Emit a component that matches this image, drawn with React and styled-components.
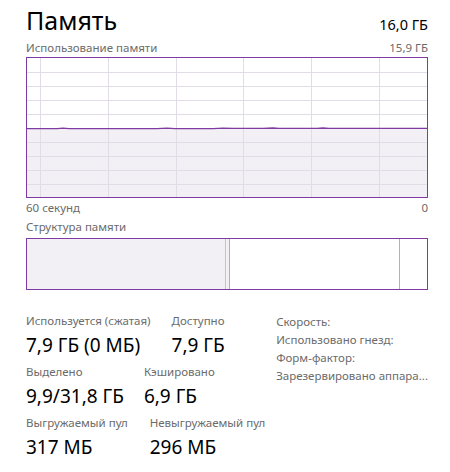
import React from "react";
import styled, { createGlobalStyle } from "styled-components";

const Global = createGlobalStyle`
  html, body { margin: 0; padding: 0; background: #fff; }
  body { font-family: "Segoe UI", "Noto Sans", "Open Sans", sans-serif; }
`;

const PURPLE = "#7f3aa3";
const GRID = "#e1dce5";
const FILL = "#f2f0f4";
const GRAY = "#6b6b6b";

const Page = styled.div`
  width: 450px;
  height: 472px;
  box-sizing: border-box;
  padding: 2px 22px 0 26px;
  display: flex;
  flex-direction: column;
`;

const HeaderRow = styled.div`
  display: flex;
  justify-content: space-between;
  align-items: baseline;
  height: 36px;
`;

const Title = styled.div`
  font-size: 25px;
  line-height: 36px;
  color: #000;
  font-weight: 400;
`;

const Total = styled.div`
  font-size: 14.5px;
  color: #000;
`;

const CaptionRow = styled.div`
  display: flex;
  justify-content: space-between;
  font-size: 11.5px;
  line-height: 16px;
  color: ${GRAY};
  margin-top: ${(p) => p.$mt || 0}px;
`;

const GraphBox = styled.div`
  width: 402px;
  height: 141px;
  box-sizing: border-box;
  border: 1px solid ${PURPLE};
  margin-top: 1px;
`;

const Composition = styled.div`
  width: 402px;
  height: 52px;
  box-sizing: border-box;
  border: 1px solid ${PURPLE};
  display: flex;
  margin-top: 3px;
`;

const Segment = styled.div`
  width: ${(p) => (p.$w ? p.$w + "px" : "auto")};
  flex: ${(p) => (p.$w ? "none" : "1")};
  background: ${(p) => (p.$filled ? FILL : "#fff")};
  border-right: ${(p) => (p.$edge ? `1px solid ${p.$edge}` : "none")};
`;

const Stats = styled.div`
  display: flex;
  margin-top: 23px;
`;

const LeftStats = styled.div`
  width: 252px;
  display: flex;
  flex-direction: column;
  gap: 4px;
`;

const StatRow = styled.div`
  display: flex;
  gap: ${(p) => p.$gap}px;
`;

const Stat = styled.div`
  display: flex;
  flex-direction: column;
`;

const StatLabel = styled.div`
  font-size: 11.5px;
  line-height: 16px;
  color: ${GRAY};
`;

const StatValue = styled.div`
  font-size: 19px;
  line-height: 30px;
  margin-top: 1px;
  color: #000;
  white-space: nowrap;
`;

const RightStats = styled.div`
  display: flex;
  flex-direction: column;
`;

const RightLabel = styled.div`
  font-size: 11.5px;
  line-height: 18px;
  color: ${GRAY};
  white-space: nowrap;
`;

function UsageGraph() {
  const vx = [13, 81, 149, 216, 284, 352];
  const hy = [14, 28, 42, 56, 70, 84, 98, 112, 126];
  const line =
    "M0 70.6 L30 70.6 L36 70.2 L42 70.6 L130 70.6 L140 70.1 L148 70.6 L186 70.6 L196 70.2 L206 70.4 L236 70.3 L246 70.0 L252 70.3 L290 70.3 L296 70.0 L302 70.3 L400 70.3";
  return (
    <svg width="400" height="139" viewBox="0 0 400 139" style={{ display: "block" }}>
      <path d={`${line} L400 139 L0 139 Z`} fill={FILL} />
      {hy.map((y) => (
        <line key={"h" + y} x1="0" x2="400" y1={y + 0.5} y2={y + 0.5} stroke={GRID} strokeWidth="1" />
      ))}
      {vx.map((x) => (
        <line key={"v" + x} x1={x + 0.5} x2={x + 0.5} y1="0" y2="139" stroke={GRID} strokeWidth="1" />
      ))}
      <path d={line} fill="none" stroke={PURPLE} strokeWidth="1.3" />
    </svg>
  );
}

export default function App() {
  return (
    <>
      <Global />
      <Page>
        <HeaderRow>
          <Title>Память</Title>
          <Total>16,0 ГБ</Total>
        </HeaderRow>
        <CaptionRow $mt={2}>
          <span>Использование памяти</span>
          <span>15,9 ГБ</span>
        </CaptionRow>
        <GraphBox>
          <UsageGraph />
        </GraphBox>
        <CaptionRow $mt={2}>
          <span>60 секунд</span>
          <span>0</span>
        </CaptionRow>
        <CaptionRow $mt={3}>
          <span>Структура памяти</span>
        </CaptionRow>
        <Composition>
          <Segment $w={198} $filled $edge="#cbbfd3" />
          <Segment $w={3} $filled $edge="#c79ddb" />
          <Segment $w={169} $edge="#c79ddb" />
          <Segment />
        </Composition>
        <Stats>
          <LeftStats>
            <StatRow $gap={21}>
              <Stat>
                <StatLabel>Используется (сжатая)</StatLabel>
                <StatValue>7,9 ГБ (0 МБ)</StatValue>
              </Stat>
              <Stat>
                <StatLabel>Доступно</StatLabel>
                <StatValue>7,9 ГБ</StatValue>
              </Stat>
            </StatRow>
            <StatRow $gap={20}>
              <Stat>
                <StatLabel>Выделено</StatLabel>
                <StatValue>9,9/31,8 ГБ</StatValue>
              </Stat>
              <Stat>
                <StatLabel>Кэшировано</StatLabel>
                <StatValue>6,9 ГБ</StatValue>
              </Stat>
            </StatRow>
            <StatRow $gap={22}>
              <Stat>
                <StatLabel>Выгружаемый пул</StatLabel>
                <StatValue>317 МБ</StatValue>
              </Stat>
              <Stat>
                <StatLabel>Невыгружаемый пул</StatLabel>
                <StatValue>296 МБ</StatValue>
              </Stat>
            </StatRow>
          </LeftStats>
          <RightStats>
            <RightLabel>Скорость:</RightLabel>
            <RightLabel>Использовано гнезд:</RightLabel>
            <RightLabel>Форм-фактор:</RightLabel>
            <RightLabel>Зарезервировано аппара...</RightLabel>
          </RightStats>
        </Stats>
      </Page>
    </>
  );
}
